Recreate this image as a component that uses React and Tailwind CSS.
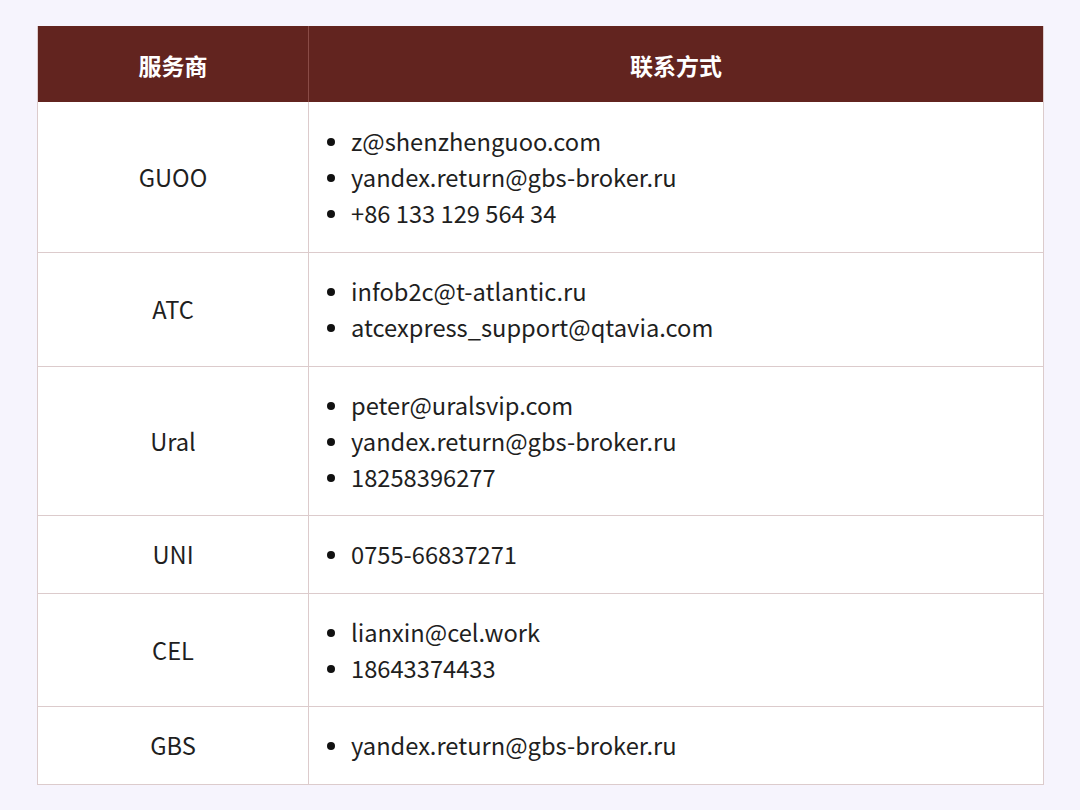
const rows = [
  { name: "GUOO", items: ["z@shenzhenguoo.com", "yandex.return@gbs-broker.ru", "+86 133 129 564 34"] },
  { name: "ATC", items: ["infob2c@t-atlantic.ru", "atcexpress_support@qtavia.com"] },
  { name: "Ural", items: ["peter@uralsvip.com", "yandex.return@gbs-broker.ru", "18258396277"] },
  { name: "UNI", items: ["0755-66837271"] },
  { name: "CEL", items: ["lianxin@cel.work", "18643374433"] },
  { name: "GBS", items: ["yandex.return@gbs-broker.ru"] },
];

export default function App() {
  return (
    <div
      className="w-[1080px] h-[810px] bg-[#f6f4fd] pt-[26px] pl-[37px]"
      style={{ fontFamily: '"Noto Sans CJK SC", "Noto Sans", sans-serif' }}
    >
      <div className="w-[1007px] border border-[#dccbcc] border-t-0 bg-white">
        {/* header */}
        <div className="flex h-[76px] bg-[#62241f] text-white text-[23px] font-bold">
          <div className="w-[271px] flex items-center justify-center pt-[2px] border-r border-[#8a4b46]">服务商</div>
          <div className="flex-1 flex items-center justify-center pt-[2px]">联系方式</div>
        </div>

        {rows.map((row, i) => (
          <div
            key={row.name}
            className={`flex ${i > 0 ? "border-t border-[#dccbcc]" : ""}`}
          >
            <div className="w-[271px] flex items-center justify-center border-r border-[#dccbcc] text-[23.7px] text-[#1f1f1f] pt-[1px]">
              {row.name}
            </div>
            <div
              className={`flex-1 pl-[18px] ${
                i === 0 ? "pt-[22px] pb-[20px]" : i % 2 === 1 ? "pt-[21px] pb-[20px]" : "pt-[21px] pb-[19px]"
              }`}
            >
              {row.items.map((item) => (
                <div key={item} className="flex items-center h-[36px] text-[23.7px] text-[#1f1f1f]">
                  <span className="w-[8px] h-[8px] rounded-full bg-[#111] mr-[16px] shrink-0" />
                  <span>{item}</span>
                </div>
              ))}
            </div>
          </div>
        ))}
      </div>
    </div>
  );
}
